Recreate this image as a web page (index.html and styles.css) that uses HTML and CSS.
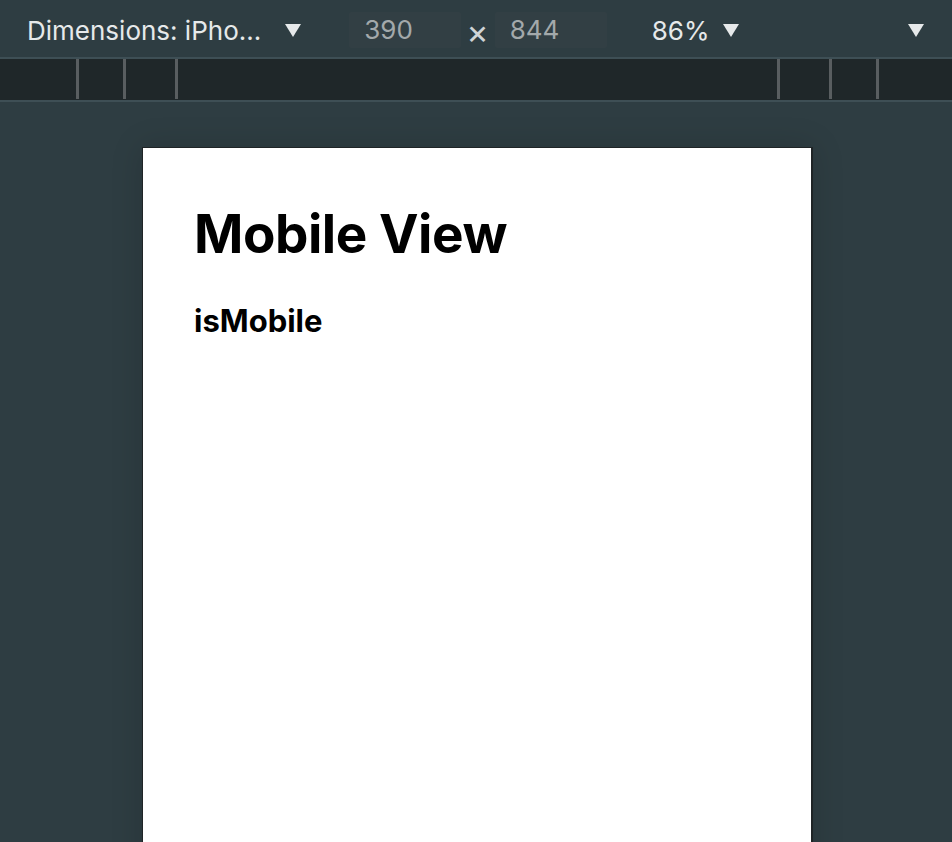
FILE: index.html
```html
<!DOCTYPE html>
<html lang="en">
<head>
  <meta charset="UTF-8" />
  <title>Mobile View</title>
  <link rel="stylesheet" href="styles.css">
</head>
<body>

  <div class="toolbar">
    <span class="device">Dimensions: iPho...</span>
    <span class="caret"></span>
    <span class="dim-box">390</span>
    <span class="times">&times;</span>
    <span class="dim-box">844</span>
    <span class="zoom">86%</span>
    <span class="caret"></span>
    <span class="spacer"></span>
    <span class="caret last"></span>
  </div>

  <div class="ruler">
    <div class="ticks">
      <span class="tick t1"></span>
      <span class="tick t2"></span>
      <span class="tick t3"></span>
    </div>
    <div class="ticks">
      <span class="tick t4"></span>
      <span class="tick t5"></span>
      <span class="tick t6"></span>
    </div>
  </div>

  <div class="canvas">
    <div class="device-frame">
      <h1>Mobile View</h1>
      <h3>isMobile</h3>
    </div>
  </div>

</body>
</html>
```

FILE: styles.css
```css
html, body {
  margin: 0;
  height: 100%;
  overflow: hidden;
}

body {
  font-family: Inter, "Noto Sans", sans-serif;
  background: #2e3d42;
}

.toolbar {
  height: 59px;
  box-sizing: border-box;
  padding: 3px 26px 0 27px;
  display: flex;
  align-items: center;
  border-bottom: 2px solid #3e4f55;
  color: #e6e9ea;
  font-size: 26px;
}

.caret {
  width: 0;
  height: 0;
  border-left: 8px solid transparent;
  border-right: 8px solid transparent;
  border-top: 13px solid #e6e9ea;
  margin-left: 24px;
}

.dim-box {
  width: 112px;
  height: 36px;
  box-sizing: border-box;
  padding-left: 15px;
  line-height: 36px;
  background: #323f44;
  color: #a3a9ab;
  border-radius: 2px;
}

.toolbar .caret + .dim-box {
  margin-left: 48px;
}

.times {
  font-size: 34px;
  color: #cfd4d6;
  margin: 0 6px 0 5px;
  padding-top: 2px;
}

.zoom {
  margin-left: 45px;
}

.zoom + .caret {
  margin-left: 14px;
}

.spacer {
  flex: 1;
}

.caret.last {
  margin-left: 0;
  margin-right: 2px;
}

.ruler {
  height: 41px;
  background: #1f2729;
  border-bottom: 2px solid #3e4f55;
  display: flex;
  justify-content: space-between;
}

.ticks {
  display: flex;
}

.tick {
  width: 3px;
  height: 40px;
  background: #595e60;
}

.t1 { margin-left: 76px; }
.t2 { margin-left: 44px; }
.t3 { margin-left: 49px; }
.t4 { margin-right: 49px; }
.t5 { margin-right: 44px; }
.t6 { margin-right: 73px; }

.canvas {
  padding: 45px 0 0 3px;
  display: flex;
  justify-content: center;
}

.device-frame {
  width: 671px;
  height: 1452px;
  background: #fff;
  box-sizing: border-box;
  border: 1px solid #1f2426;
  border-right-width: 2px;
  box-shadow: 0 0 30px rgba(0, 0, 0, 0.15);
  padding: 48px 51px;
  color: #000;
}

.device-frame h1 {
  font-size: 53px;
  font-weight: 700;
  margin: 0;
  line-height: 76px;
  letter-spacing: -0.45px;
}

.device-frame h3 {
  font-size: 31px;
  font-weight: 700;
  margin: 29px 0 0;
  line-height: 40px;
}
```
